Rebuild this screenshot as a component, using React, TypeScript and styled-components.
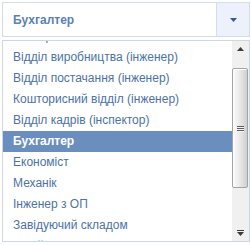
import { useLayoutEffect, useRef } from 'react'
import styled, { createGlobalStyle } from 'styled-components'

const GlobalStyle = createGlobalStyle`
  html, body {
    margin: 0;
    padding: 0;
    background: #ffffff;
  }
  body {
    font-family: "Liberation Sans", Arial, sans-serif;
  }
`

const Page = styled.div`
  padding: 2px 1px 0 2px;
  width: 251px;
  box-sizing: border-box;
`

const SelectBox = styled.div`
  display: flex;
  height: 35px;
  box-sizing: border-box;
  border: 1px solid #d3dce8;
  background: #ffffff;
`

const SelectLabel = styled.div`
  flex: 1;
  display: flex;
  align-items: center;
  padding-left: 10px;
  font-size: 12px;
  font-weight: bold;
  color: #5a80b8;
`

const ArrowBox = styled.div`
  width: 32px;
  display: flex;
  align-items: center;
  justify-content: center;
  background: #edf1fb;
  border-left: 1px solid #d5ddf3;
`

const ListFrame = styled.div`
  margin-top: 3px;
  height: 202px;
  box-sizing: border-box;
  border: 1px solid #cdd6e2;
  display: flex;
  background: #ffffff;
`

const Viewport = styled.div`
  flex: 1;
  overflow: hidden;
`

const Item = styled.div<{ $selected?: boolean }>`
  height: 21px;
  line-height: 21px;
  padding-left: 10px;
  font-size: 12px;
  white-space: nowrap;
  color: ${p => (p.$selected ? '#ffffff' : '#4d72a6')};
  background: ${p => (p.$selected ? '#6a8fbf' : 'transparent')};
  font-weight: ${p => (p.$selected ? 'bold' : 'normal')};
`

const Scrollbar = styled.div`
  width: 17px;
  display: flex;
  flex-direction: column;
  background: #f0f0f0;
`

const ScrollButton = styled.div`
  height: 16px;
  display: flex;
  align-items: center;
  justify-content: center;
`

const Track = styled.div`
  flex: 1;
  padding: 0 1px 0 0;
`

const Thumb = styled.div`
  box-sizing: border-box;
  border: 1px solid #a3a3a3;
  border-radius: 2px;
  display: flex;
  align-items: center;
  justify-content: center;
  background: linear-gradient(to right, #fbfbfb, #e8e8e8 50%, #cfcfcf);
  box-shadow: inset 1px 1px 0 #ffffff;
`

const Grip = styled.div`
  width: 7px;
  display: flex;
  flex-direction: column;
  gap: 1px;

  span {
    display: block;
    height: 1px;
    background: #5e5e5e;
    box-shadow: 0 1px 0 #f4f4f4;
  }
`

const positions = [
  'Електрик',
  'Відділ виробництва (інженер)',
  'Відділ постачання (інженер)',
  'Кошторисний відділ (інженер)',
  'Відділ кадрів (інспектор)',
  'Бухгалтер',
  'Економіст',
  'Механік',
  'Інженер з ОП',
  'Завідуючий складом',
  'Водій навантажувача',
  'Охоронець',
  'Прибиральниця',
]

const ROW = 21
const VIEW = 200
const TRACK = VIEW - 32
const SCROLL = 15

const App = () => {
  const selected = 'Бухгалтер'
  const listRef = useRef<HTMLDivElement>(null)

  useLayoutEffect(() => {
    if (listRef.current) listRef.current.scrollTop = SCROLL
  }, [])

  const total = positions.length * ROW
  const thumbH = Math.round((TRACK * VIEW) / total) - 3
  const thumbTop = Math.round((TRACK * SCROLL) / total) + 2

  return (
    <Page>
      <GlobalStyle />
      <SelectBox>
        <SelectLabel>{selected}</SelectLabel>
        <ArrowBox>
          <svg width="7" height="4" viewBox="0 0 7 4">
            <polygon points="0,0 7,0 3.5,4" fill="#34589a" />
          </svg>
        </ArrowBox>
      </SelectBox>
      <ListFrame>
        <Viewport ref={listRef}>
          {positions.map(p => (
            <Item key={p} $selected={p === selected}>
              {p}
            </Item>
          ))}
        </Viewport>
        <Scrollbar>
          <ScrollButton>
            <svg width="7" height="4" viewBox="0 0 7 4">
              <polygon points="3.5,0 7,4 0,4" fill="#3c3c3c" />
            </svg>
          </ScrollButton>
          <Track>
            <Thumb style={{ marginTop: thumbTop, height: thumbH }}>
              <Grip>
                <span />
                <span />
                <span />
              </Grip>
            </Thumb>
          </Track>
          <ScrollButton>
            <svg width="7" height="6" viewBox="0 0 7 6">
              <rect x="0" y="0" width="7" height="1" fill="#3c3c3c" />
              <polygon points="0,2 7,2 3.5,6" fill="#3c3c3c" />
            </svg>
          </ScrollButton>
        </Scrollbar>
      </ListFrame>
    </Page>
  )
}

export default App
